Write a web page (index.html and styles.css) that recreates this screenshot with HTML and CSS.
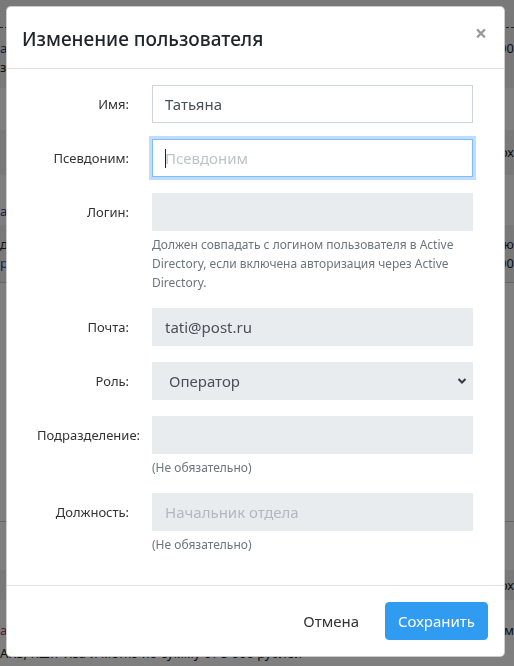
FILE: index.html
```html
<!DOCTYPE html>
<html lang="ru">
<head>
    <meta charset="utf-8">
    <title>Изменение пользователя</title>
    <meta name="viewport" content="width=device-width, initial-scale=1">
    <link rel="stylesheet" href="styles.css">
</head>
<body>
<!-- страница под модальным окном -->
<div class="page">
    <div class="band grey h27"></div>
    <div class="band grey dashed h61 two-lines">
        <div class="line"><span class="link">а</span><span>000</span></div>
        <div class="line"><span>зу</span><span></span></div>
    </div>
    <div class="band h42"></div>
    <div class="band grey h45 one-line">
        <div class="line"><span></span><span>ох</span></div>
    </div>
    <div class="band h50 bottom-text">
        <div class="line"><span class="link">а</span><span></span></div>
    </div>
    <div class="band grey h57 two-lines">
        <div class="line"><span>д</span><span>ю</span></div>
        <div class="line"><span class="link">р</span><span>000</span></div>
    </div>
    <div class="band ruled h240"></div>
    <div class="band h48"></div>
    <div class="band grey h30 one-line">
        <div class="line"><span></span><span>ох</span></div>
    </div>
    <div class="band h20"></div>
    <div class="band h20 one-line">
        <div class="line"><span class="pink">а</span><span>м</span></div>
    </div>
    <div class="band h26 one-line">
        <div class="line"><span>ARS, Кшп Visa и метко по сумму от 5 000 рублей</span></div>
    </div>
</div>

<div class="backdrop"></div>

<div class="modal">
    <div class="modal-content">
        <div class="modal-header">
            <h5 class="modal-title">Изменение пользователя</h5>
            <button type="button" class="close">&times;</button>
        </div>

        <div class="modal-body">
            <div class="form-row">
                <label class="form-label">Имя:</label>
                <div class="field">
                    <input class="form-control" type="text" value="Татьяна">
                </div>
            </div>

            <div class="form-row">
                <label class="form-label">Псевдоним:</label>
                <div class="field focus-wrap">
                    <input class="form-control focused" type="text" placeholder="Псевдоним">
                    <span class="caret"></span>
                </div>
            </div>

            <div class="form-row">
                <label class="form-label">Логин:</label>
                <div class="field">
                    <input class="form-control" type="text" disabled>
                    <small class="form-text">Должен совпадать с логином пользователя в Active Directory, если включена авторизация через Active Directory.</small>
                </div>
            </div>

            <div class="form-row">
                <label class="form-label">Почта:</label>
                <div class="field">
                    <input class="form-control" type="text" value="tati@post.ru" disabled>
                </div>
            </div>

            <div class="form-row">
                <label class="form-label">Роль:</label>
                <div class="field select-wrap">
                    <select class="form-control" disabled>
                        <option>Оператор</option>
                    </select>
                    <svg class="select-arrow" width="10" height="8" viewBox="0 0 10 8">
                        <path d="M1.5 2 L5 5.5 L8.5 2" fill="none" stroke="#343a40" stroke-width="2"/>
                    </svg>
                </div>
            </div>

            <div class="form-row">
                <label class="form-label">Подразделение:</label>
                <div class="field">
                    <input class="form-control" type="text" disabled>
                    <small class="form-text">(Не обязательно)</small>
                </div>
            </div>

            <div class="form-row">
                <label class="form-label">Должность:</label>
                <div class="field">
                    <input class="form-control" type="text" placeholder="Начальник отдела" disabled>
                    <small class="form-text">(Не обязательно)</small>
                </div>
            </div>
        </div>

        <div class="modal-footer">
            <button type="button" class="btn btn-cancel">Отмена</button>
            <button type="button" class="btn btn-primary">Сохранить</button>
        </div>
    </div>
</div>
</body>
</html>
```

FILE: styles.css
```css
html, body {
    margin: 0;
    height: 100%;
}

body {
    font-family: "Noto Sans", "Open Sans", sans-serif;
    color: #212529;
    background-color: #fff;
    overflow: hidden;
}

/* page behind the dialog */
.page {
    font-size: 13px;
    color: #222;
}

.band {
    box-sizing: border-box;
    display: flex;
    flex-direction: column;
    justify-content: center;
}

.grey { background-color: #f2f2f2; }
.dashed { border-top: 1px dashed #444; }
.ruled { border-top: 1px solid #ccc; border-bottom: 1px solid #ccc; }
.bottom-text { justify-content: flex-end; padding-bottom: 4px; }

.h20 { height: 20px; }
.h26 { height: 26px; }
.h27 { height: 27px; }
.h30 { height: 30px; }
.h42 { height: 42px; }
.h45 { height: 45px; }
.h48 { height: 48px; }
.h50 { height: 50px; }
.h57 { height: 57px; }
.h61 { height: 61px; }
.h240 { height: 240px; }

.line {
    display: flex;
    justify-content: space-between;
    line-height: 19px;
    white-space: nowrap;
}

.link { color: #1a3fb0; }
.pink { color: #b0306a; }

.backdrop {
    position: fixed;
    inset: 0;
    background-color: rgba(0, 0, 0, 0.5);
}

/* dialog */
.modal {
    position: fixed;
    inset: 0;
    padding: 6px 10px 0 6px;
}

.modal-content {
    background-color: #fff;
    border: 1px solid rgba(0, 0, 0, 0.2);
    border-radius: 5px;
    width: 497px;
}

.modal-header {
    display: flex;
    align-items: flex-start;
    justify-content: space-between;
    padding: 15px 16px 16px 15px;
    height: 30px;
    border-bottom: 1px solid #dee2e6;
}

.modal-title {
    margin: 0;
    font-size: 19px;
    font-weight: 500;
    line-height: 34px;
    color: #212529;
}

.close {
    border: 0;
    background: none;
    padding: 0;
    margin: 1px 1px 0 0;
    font-family: "Noto Sans", sans-serif;
    font-size: 21px;
    font-weight: 700;
    line-height: 20px;
    color: #000;
    opacity: 0.4;
}

.modal-body {
    padding: 16px 16px 15px 16px;
}

.form-row {
    display: grid;
    grid-template-columns: 92px 321px;
    column-gap: 23px;
    padding-left: 14px;
    margin-bottom: 16px;
}

.form-label {
    text-align: right;
    font-size: 13px;
    line-height: 24px;
    padding-top: 7px;
    color: #333;
    white-space: nowrap;
}

.field {
    display: flex;
    flex-direction: column;
}

.form-control {
    box-sizing: border-box;
    width: 100%;
    height: 38px;
    padding: 6px 12px;
    font-family: inherit;
    font-size: 15px;
    line-height: 24px;
    color: #495057;
    background-color: #fff;
    border: 1px solid #ced4da;
    border-radius: 0;
    outline: none;
}

.form-control::placeholder {
    color: #bfc3c7;
}

.form-control:disabled {
    background-color: #e9ecef;
    border-color: #e9ecef;
    color: #495057;
    opacity: 1;
}

.form-control:disabled::placeholder {
    color: #b3b8bd;
}

.focused {
    border-color: #80bdff;
    box-shadow: 0 0 0 3px rgba(0, 123, 255, 0.25);
}

.focus-wrap,
.select-wrap {
    position: relative;
}

.caret {
    position: absolute;
    left: 13px;
    top: 10px;
    width: 1px;
    height: 19px;
    background-color: #222;
}

select.form-control {
    appearance: none;
    -webkit-appearance: none;
    padding-left: 16px;
}

.select-arrow {
    position: absolute;
    right: 6px;
    top: 15px;
}

.form-text {
    display: block;
    margin-top: 4px;
    font-size: 12px;
    line-height: 19px;
    color: #6c757d;
}

.modal-footer {
    display: flex;
    justify-content: flex-end;
    align-items: center;
    padding: 12px;
    border-top: 1px solid #dee2e6;
}

.btn {
    height: 38px;
    padding: 0 12px;
    margin: 4px;
    border: 1px solid transparent;
    border-radius: 4px;
    font-family: inherit;
    font-size: 15px;
    line-height: 24px;
    background: none;
    cursor: pointer;
}

.btn-cancel {
    color: #333;
    margin-right: 9px;
}

.btn-primary {
    color: #fff;
    background-color: #2f9cf2;
    border-color: #2f9cf2;
}
```
